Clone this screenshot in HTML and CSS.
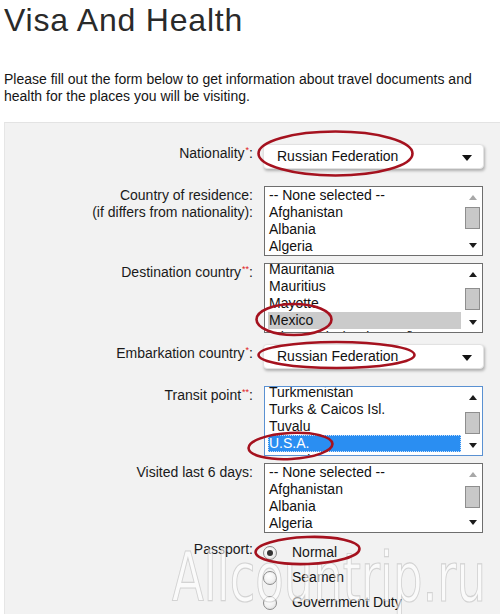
FILE: index.html
```html
<!DOCTYPE html>
<html>
<head>
<meta charset="utf-8">
<title>Visa And Health</title>
<link rel="stylesheet" href="styles.css">
</head>
<body>
<div class="page">
  <h1 class="title">Visa And Health</h1>
  <p class="intro">Please fill out the form below to get information about travel documents and health for the places you will be visiting.</p>

  <form class="panel">
    <div class="row row-select">
      <label class="lbl">Nationality<sup class="req">*</sup>:</label>
      <div class="select"><span class="select-text">Russian Federation</span><span class="caret"></span></div>
    </div>

    <div class="row">
      <label class="lbl">Country of residence:<br>(if differs from nationality):</label>
      <div class="listbox">
        <ul class="items">
          <li>-- None selected --</li>
          <li>Afghanistan</li>
          <li>Albania</li>
          <li>Algeria</li>
          <li>American Samoa</li>
        </ul>
        <div class="sb">
          <span class="arr"><span class="tri up off"></span></span>
          <span class="track"><span class="thumb" style="margin-top:0px"></span></span>
          <span class="arr"><span class="tri down"></span></span>
        </div>
      </div>
    </div>

    <div class="row">
      <label class="lbl">Destination country<sup class="req">**</sup>:</label>
      <div class="listbox">
        <ul class="items scrolled">
          <li>Mauritania</li>
          <li>Mauritius</li>
          <li>Mayotte</li>
          <li class="sel-inactive">Mexico</li>
          <li>Micronesia (Fed. St. of)</li>
        </ul>
        <div class="sb">
          <span class="arr"><span class="tri up"></span></span>
          <span class="track"><span class="thumb" style="margin-top:4px"></span></span>
          <span class="arr"><span class="tri down"></span></span>
        </div>
      </div>
    </div>

    <div class="row row-select">
      <label class="lbl">Embarkation country<sup class="req">*</sup>:</label>
      <div class="select"><span class="select-text">Russian Federation</span><span class="caret"></span></div>
    </div>

    <div class="row">
      <label class="lbl">Transit point<sup class="req">**</sup>:</label>
      <div class="listbox focused">
        <ul class="items scrolled">
          <li>Turkmenistan</li>
          <li>Turks &amp; Caicos Isl.</li>
          <li>Tuvalu</li>
          <li class="sel-active">U.S.A.</li>
          <li>Uganda</li>
        </ul>
        <div class="sb">
          <span class="arr"><span class="tri up"></span></span>
          <span class="track"><span class="thumb" style="margin-top:5px"></span></span>
          <span class="arr"><span class="tri down"></span></span>
        </div>
      </div>
    </div>

    <div class="row">
      <label class="lbl">Visited last 6 days:</label>
      <div class="listbox">
        <ul class="items">
          <li>-- None selected --</li>
          <li>Afghanistan</li>
          <li>Albania</li>
          <li>Algeria</li>
          <li>American Samoa</li>
        </ul>
        <div class="sb">
          <span class="arr"><span class="tri up off"></span></span>
          <span class="track"><span class="thumb" style="margin-top:2px"></span></span>
          <span class="arr"><span class="tri down"></span></span>
        </div>
      </div>
    </div>

    <div class="row">
      <label class="lbl">Passport:</label>
      <div class="radios">
        <div class="radio-row"><span class="radio checked"></span><span class="radio-text">Normal</span></div>
        <div class="radio-row"><span class="radio"></span><span class="radio-text">Seamen</span></div>
        <div class="radio-row"><span class="radio"></span><span class="radio-text">Government Duty</span></div>
      </div>
    </div>
  </form>
</div>

<svg class="marks" width="500" height="614" viewBox="0 0 500 614" aria-hidden="true">
  <text class="watermark" x="172" y="601" textLength="314" lengthAdjust="spacingAndGlyphs">Allcountrip.ru</text>
  <g class="ellipses">
    <ellipse cx="335.5" cy="153.5" rx="77" ry="22"/>
    <ellipse cx="294" cy="319.5" rx="37.5" ry="15.5"/>
    <ellipse cx="336.5" cy="355" rx="78" ry="13"/>
    <ellipse cx="290.5" cy="446" rx="42" ry="13" transform="rotate(-3 290.5 446)"/>
    <ellipse cx="307.5" cy="550.5" rx="52" ry="13.5" transform="rotate(-2 307.5 550.5)"/>
  </g>
</svg>
</body>
</html>
```

FILE: styles.css
```css
html, body {
  margin: 0;
  padding: 0;
}

body {
  position: relative;
  width: 500px;
  height: 614px;
  overflow: hidden;
  background: #ffffff;
  color: #151515;
  font-family: "Liberation Sans", Arial, sans-serif;
}

.page {
  padding-left: 4px;
}

.title {
  margin: 0;
  padding-top: 2px;
  font-size: 32px;
  line-height: 36px;
  font-weight: normal;
  letter-spacing: 0.8px;
  color: #2a2a2a;
}

.intro {
  margin: 33px 0 0;
  max-width: 480px;
  font-size: 14px;
  line-height: 17px;
  color: #151515;
}

.panel {
  margin-top: 17px;
  display: flex;
  flex-direction: column;
  gap: 7px;
  padding: 17px 0 0;
  background: #f2f2f2;
  border-top: 1px solid #e3e3e3;
  border-left: 1px solid #e6e6e6;
}

.row {
  display: grid;
  grid-template-columns: 250px 221px;
  column-gap: 8px;
  align-items: start;
}

.row-select {
  padding: 4px 0 10px;
}

.lbl {
  padding: 1px 2px 0 0;
  text-align: right;
  font-size: 14px;
  line-height: 17px;
  color: #1a1a1a;
  white-space: nowrap;
}

.req {
  color: #e0201c;
  font-size: 9px;
  line-height: 0;
  vertical-align: 5px;
  margin-left: 1px;
}

/* drop-down select */
.select {
  box-sizing: border-box;
  height: 25px;
  display: flex;
  align-items: center;
  justify-content: space-between;
  padding: 0 11px 0 13px;
  background: #ffffff;
  border: 1px solid #e2e2e2;
  border-radius: 4px;
  box-shadow: 1px 2px 3px rgba(0, 0, 0, 0.28);
}

.select-text {
  font-size: 14px;
  line-height: 23px;
  color: #111;
}

.caret {
  width: 0;
  height: 0;
  border-left: 5px solid transparent;
  border-right: 5px solid transparent;
  border-top: 6px solid #111;
  margin-top: 2px;
}

/* list box */
.listbox {
  box-sizing: border-box;
  width: 219px;
  height: 70px;
  margin-left: 1px;
  display: flex;
  background: #ffffff;
  border: 1px solid #6e6e6e;
  overflow: hidden;
}

.listbox.focused {
  border-color: #5a91d2;
}

.items {
  flex: 1;
  min-width: 0;
  margin: 0;
  padding: 0 2px 0 3px;
  list-style: none;
}

.items.scrolled {
  margin-top: -3px;
}

.items li {
  padding-left: 1px;
  font-size: 14px;
  line-height: 17px;
  white-space: nowrap;
  overflow: hidden;
  color: #111;
}

.items li.sel-inactive {
  background: #cbcbcb;
}

.items li.sel-active {
  background: #2a8ef2;
  color: #ffffff;
  outline: 1px dotted #c9e0fa;
  outline-offset: -1px;
}

/* scrollbar */
.sb {
  width: 19px;
  flex: none;
  display: flex;
  flex-direction: column;
  background: #ffffff;
}

.arr {
  height: 20px;
  display: flex;
  align-items: center;
  justify-content: center;
}

.track {
  flex: 1;
  display: flex;
  flex-direction: column;
  align-items: center;
}

.thumb {
  box-sizing: border-box;
  width: 15px;
  height: 22px;
  background: #c8c8c8;
  border: 1px solid #8e8e8e;
}

.tri {
  width: 0;
  height: 0;
  border-left: 4px solid transparent;
  border-right: 4px solid transparent;
}

.tri.up {
  border-bottom: 5px solid #1c1c1c;
}

.tri.down {
  border-top: 5px solid #1c1c1c;
}

.tri.up.off {
  border-bottom-color: #a8a8a8;
}

/* radios */
.radios {
  display: flex;
  flex-direction: column;
}

.radio-row {
  height: 25px;
  display: flex;
  align-items: center;
  gap: 15px;
}

.radio {
  box-sizing: border-box;
  width: 14px;
  height: 14px;
  border-radius: 50%;
  border: 1px solid #8c8c8c;
  background: radial-gradient(circle at 40% 35%, #ffffff 0%, #f2f2f2 50%, #d8d8d8 100%);
  display: flex;
  align-items: center;
  justify-content: center;
}

.radio.checked::after {
  content: "";
  width: 6px;
  height: 6px;
  border-radius: 50%;
  background: #333333;
}

.radio-text {
  font-size: 14px;
  line-height: 17px;
  color: #151515;
}

/* annotation overlay */
.marks {
  position: absolute;
  top: 0;
  left: 0;
  pointer-events: none;
}

.ellipses ellipse {
  fill: none;
  stroke: #a5121f;
  stroke-width: 2.6;
}

.watermark {
  font-family: "DejaVu Sans", sans-serif;
  font-size: 68px;
  fill: rgba(255, 255, 255, 0.6);
  stroke: rgba(130, 130, 130, 0.3);
  stroke-width: 1.2;
}
```
